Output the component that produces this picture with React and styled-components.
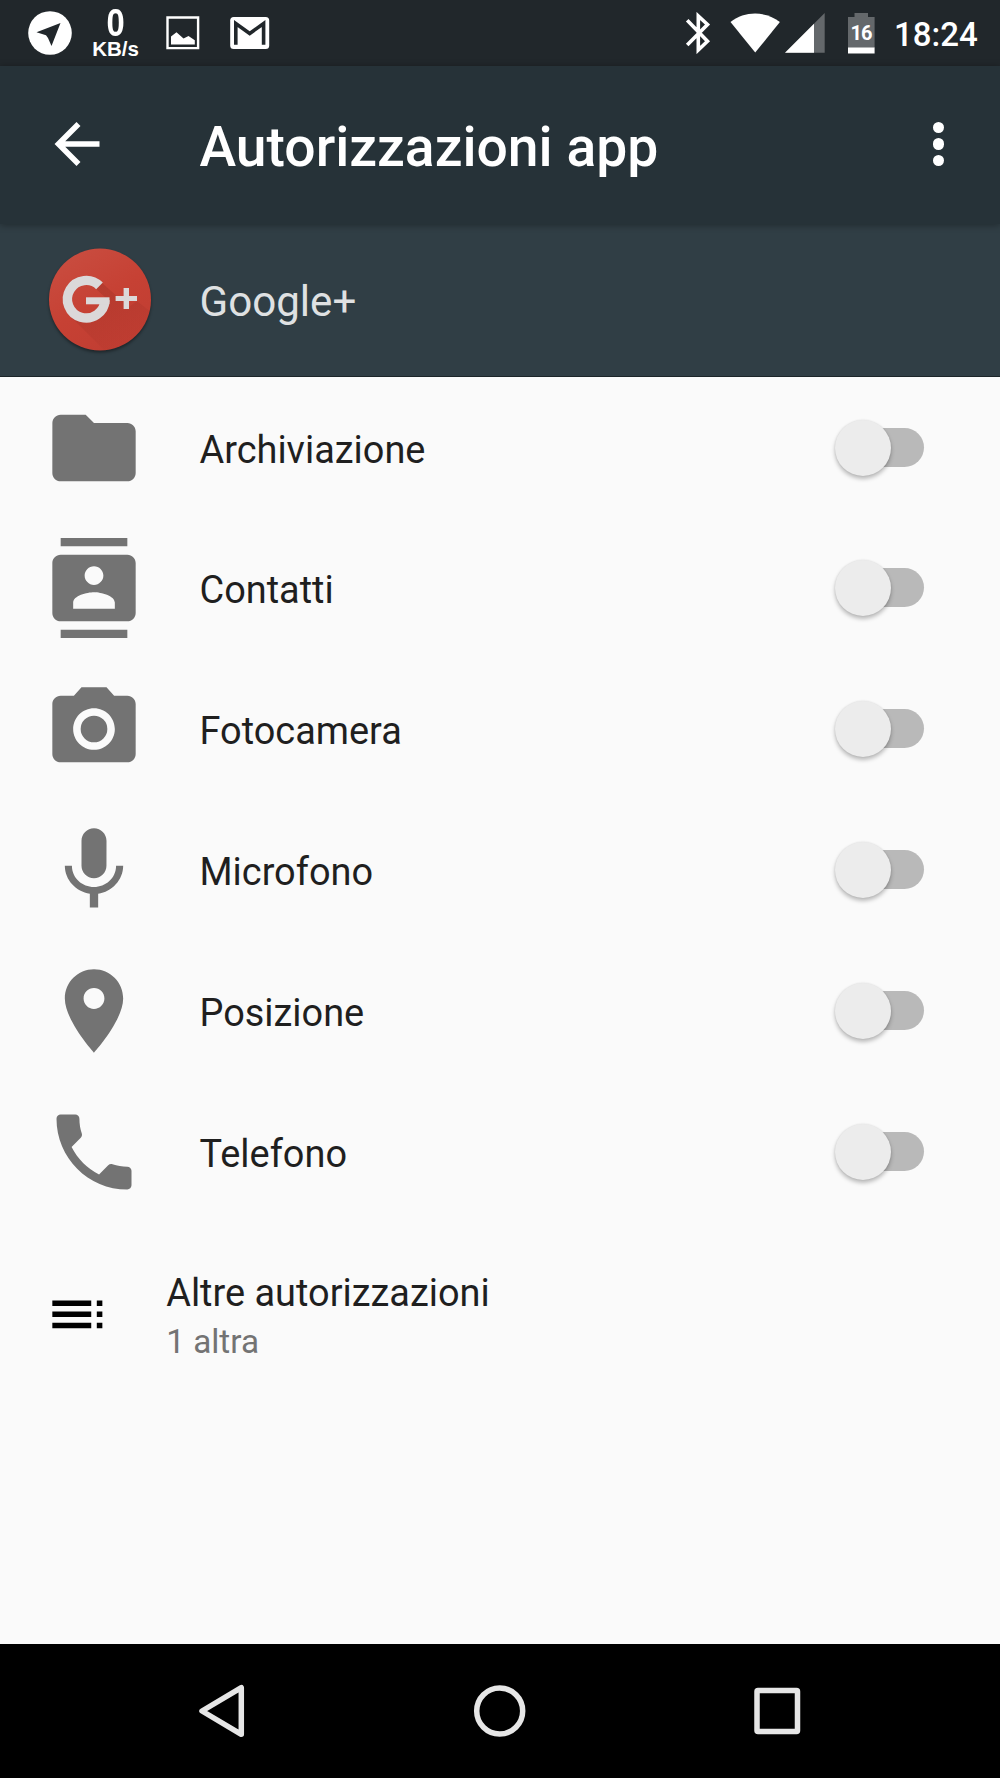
import { useState } from 'react'
import styled, { createGlobalStyle } from 'styled-components'

const permissions = [
  {
    name: 'Archiviazione',
    path: 'M10 4H4c-1.1 0-1.99.9-1.99 2L2 18c0 1.1.9 2 2 2h16c1.1 0 2-.9 2-2V8c0-1.1-.9-2-2-2h-8l-2-2z',
  },
  {
    name: 'Contatti',
    path: 'M20 0H4v2h16V0zM4 24h16v-2H4v2zM20 4H4c-1.1 0-2 .9-2 2v12c0 1.1.9 2 2 2h16c1.1 0 2-.9 2-2V6c0-1.1-.9-2-2-2zm-8 2.75c1.24 0 2.25 1.01 2.25 2.25s-1.01 2.25-2.25 2.25S9.75 10.24 9.75 9 10.76 6.75 12 6.75zM17 17H7v-1.5c0-1.67 3.33-2.5 5-2.5s5 .83 5 2.5V17z',
  },
  {
    name: 'Fotocamera',
    path: 'M12 8.8a3.2 3.2 0 1 0 0 6.4a3.2 3.2 0 1 0 0-6.4zM9 2L7.17 4H4c-1.1 0-2 .9-2 2v12c0 1.1.9 2 2 2h16c1.1 0 2-.9 2-2V6c0-1.1-.9-2-2-2h-3.17L15 2H9zm3 15c-2.76 0-5-2.24-5-5s2.24-5 5-5 5 2.24 5 5-2.24 5-5 5z',
  },
  {
    name: 'Microfono',
    path: 'M12 14c1.66 0 2.99-1.34 2.99-3L15 5c0-1.66-1.34-3-3-3S9 3.34 9 5v6c0 1.66 1.34 3 3 3zm5.3-3c0 3-2.54 5.1-5.3 5.1S6.7 14 6.7 11H5c0 3.41 2.72 6.23 6 6.72V21h2v-3.28c3.28-.48 6-3.3 6-6.72h-1.7z',
  },
  {
    name: 'Posizione',
    path: 'M12 2C8.13 2 5 5.13 5 9c0 5.25 7 13 7 13s7-7.75 7-13c0-3.87-3.13-7-7-7zm0 9.5c-1.38 0-2.5-1.12-2.5-2.5s1.12-2.5 2.5-2.5 2.5 1.12 2.5 2.5-1.12 2.5-2.5 2.5z',
  },
  {
    name: 'Telefono',
    path: 'M6.62 10.79c1.44 2.83 3.76 5.14 6.59 6.59l2.2-2.2c.27-.27.67-.36 1.02-.24 1.12.37 2.33.57 3.57.57.55 0 1 .45 1 1V20c0 .55-.45 1-1 1-9.39 0-17-7.61-17-17 0-.55.45-1 1-1h3.5c.55 0 1 .45 1 1 0 1.25.2 2.45.57 3.57.11.35.03.74-.25 1.02l-2.2 2.2z',
  },
]

function StatusBar() {
  return (
    <StatusBarStyled>
      <StatusIcon $left={27.5} width="44" height="44" viewBox="0 0 44 44">
        <circle cx="22" cy="22" r="21.8" />
        <path className="cut" d="M8.5 21.2L32.5 12L23.5 35L20 27L18 24.2z" />
      </StatusIcon>
      <NetSpeed>
        <span className="value">0</span>
        <span className="unit">KB/s</span>
      </NetSpeed>
      <StatusIcon $left={28} width="34" height="34" viewBox="0 0 34 34">
        <path fillRule="evenodd" d="M0.3 0.3H33.3V33.3H0.3zM2.7 2.7V30.9H30.9V2.7z" />
        <path d="M5 28.5V20.5L10.5 16.2L17.5 22.5L22.5 20L28.8 24.2V28.5z" />
      </StatusIcon>
      <StatusIcon $left={30} width="40" height="34" viewBox="0 0 40 34">
        <rect x="0.2" y="1" width="39" height="32" rx="3.5" />
        <path className="line" d="M5.8 28.8V7.5L19.7 17.5L33.6 7.5V28.8" />
      </StatusIcon>

      <StatusIcon $push width="26" height="42" viewBox="0 0 26 42">
        <path className="stroke" d="M2.2 8.2L22.5 29.3L13.3 38V4L22.5 12.5L2.2 33" />
      </StatusIcon>
      <StatusIcon $left={19} width="50" height="40" viewBox="0 0 50 40">
        <path d="M0.5 9C15 -2.3 35 -2.3 49.9 9L25.2 39.6z" />
      </StatusIcon>
      <StatusIcon $left={5} width="40" height="40" viewBox="0 0 40 40">
        <path className="dim" d="M39.7 0V39.7H0z" />
        <path d="M29 10.7V39.7H0z" />
      </StatusIcon>
      <Battery>
        <svg width="27" height="41" viewBox="0 0 27 41">
          <path className="dim" d="M0 4H6.5V0H20V4H26.6V35H0z" />
          <path d="M0 34.5H26.6V40.5H0z" />
        </svg>
        <span>16</span>
      </Battery>
      <Clock>18:24</Clock>
    </StatusBarStyled>
  )
}

function GooglePlusLogo() {
  return (
    <Logo width="108" height="108" viewBox="0 0 108 108">
      <defs>
        <linearGradient id="disc" x1="0.2" y1="0" x2="0.8" y2="1">
          <stop offset="0" stopColor="#c94d40" />
          <stop offset="0.5" stopColor="#c64134" />
          <stop offset="1" stopColor="#c03d32" />
        </linearGradient>
        <linearGradient id="fade" x1="0" y1="0" x2="0.6" y2="1">
          <stop offset="0" stopColor="#7a2119" stopOpacity="0.28" />
          <stop offset="1" stopColor="#7a2119" stopOpacity="0.02" />
        </linearGradient>
        <clipPath id="round">
          <circle cx="54" cy="53.5" r="51" />
        </clipPath>
      </defs>
      <circle cx="54" cy="53.5" r="51" fill="url(#disc)" />
      <path
        clipPath="url(#round)"
        fill="url(#fade)"
        d="M24 70L60 106L108 106L105 66L91 55L83 61L55 36L50 43L60 52V62L40 76z"
      />
      <path
        d="M53.5 39.9A18.8 18.8 0 1 0 59 54"
        fill="none"
        stroke="#dbd8d9"
        strokeWidth="9.4"
      />
      <path fill="#dbd8d9" d="M40 51.3h23.5v7H40z" />
      <path fill="#dbd8d9" d="M77.6 42H83v7.900h8v5.200h-8v8h-5.400v-8h-8v-5.200h8z" />
    </Logo>
  )
}

function Permission({ name, path }) {
  const [on, setOn] = useState(false)

  return (
    <PermissionStyled onClick={() => setOn(!on)}>
      <svg width="100" height="100" viewBox="0 0 24 24">
        <path fillRule="evenodd" d={path} />
      </svg>
      <p>{name}</p>
      <Switch $on={on}>
        <div className="thumb"></div>
      </Switch>
    </PermissionStyled>
  )
}

function App() {
  return (
    <>
      <GlobalStyle />
      <Screen>
        <StatusBar />
        <AppBar>
          <svg width="48" height="48" viewBox="0 0 48 48">
            <path d="M25.5 4L5.5 24L25.5 44M5.5 24H46.5" fill="none" stroke="#fff" strokeWidth="5.6" />
          </svg>
          <h1>Autorizzazioni app</h1>
          <div className="more">
            <i />
            <i />
            <i />
          </div>
        </AppBar>
        <AppHeader>
          <GooglePlusLogo />
          <p>Google+</p>
        </AppHeader>
        <List>
          {permissions.map((item) => (
            <Permission key={item.name} name={item.name} path={item.path} />
          ))}
          <MoreRow>
            <svg width="66.7" height="66.7" viewBox="0 0 24 24">
              <path d="M3 9h14V7H3v2zm0 4h14v-2H3v2zm0 4h14v-2H3v2zm16 0h2v-2h-2v2zm0-10v2h2V7h-2zm0 6h2v-2h-2v2z" />
            </svg>
            <div>
              <p className="title">Altre autorizzazioni</p>
              <p className="sub">1 altra</p>
            </div>
          </MoreRow>
        </List>
        <NavBar>
          <svg width="52" height="60" viewBox="0 0 52 60">
            <path d="M45.3 6.7V53.3L6 30z" />
          </svg>
          <svg width="60" height="60" viewBox="0 0 60 60">
            <circle cx="29.7" cy="30" r="23" />
          </svg>
          <svg width="52" height="60" viewBox="0 0 52 60">
            <rect x="6" y="9.5" width="40.5" height="41" rx="1" />
          </svg>
        </NavBar>
      </Screen>
    </>
  )
}

const GlobalStyle = createGlobalStyle`
    * {
        box-sizing: border-box;
        margin: 0;
        padding: 0;
    }
    body {
        font-family: Roboto, sans-serif;
        background-color: #fafafa;
    }
    svg {
        display: block;
        flex-shrink: 0;
    }
`;

const Screen = styled.div`
    width: 1000px;
    height: 1778px;
    display: flex;
    flex-direction: column;
    overflow: hidden;
    background-color: #fafafa;
`;

const StatusBarStyled = styled.div`
    display: flex;
    align-items: center;
    height: 66px;
    padding-right: 22px;
    flex-shrink: 0;
    background-color: #21272b;
    color: #fff;
`;

const StatusIcon = styled.svg`
    margin-left: ${({ $push, $left }) => ($push ? 'auto' : `${$left}px`)};
    fill: #fff;
    .cut {
        fill: #21272b;
    }
    .dim {
        fill: #64686b;
    }
    .line {
        fill: none;
        stroke: #21272b;
        stroke-width: 3.6;
    }
    .stroke {
        fill: none;
        stroke: #fff;
        stroke-width: 3.6;
    }
`;

const NetSpeed = styled.div`
    display: flex;
    flex-direction: column;
    align-items: center;
    width: 47px;
    margin-left: 20.5px;
    margin-right: -1px;
    padding-top: 1px;
    font-family: 'Liberation Sans', sans-serif;
    font-weight: bold;
    .value {
        font-size: 38px;
        line-height: 31px;
        transform: scaleX(0.86);
    }
    .unit {
        font-size: 20.5px;
        line-height: 20px;
    }
`;

const Battery = styled.div`
    display: grid;
    place-items: center;
    margin-left: 23px;
    fill: #fff;
    .dim {
        fill: #64686b;
    }
    > * {
        grid-area: 1 / 1;
    }
    span {
        padding-right: 1px;
        font-size: 20px;
        font-weight: 700;
        line-height: 20px;
        letter-spacing: -1px;
    }
`;

const Clock = styled.p`
    width: 84px;
    margin-left: 19px;
    padding-top: 4px;
    font-size: 33px;
    font-weight: 500;
    line-height: 40px;
    white-space: nowrap;
`;

const AppBar = styled.div`
    position: relative;
    display: flex;
    align-items: center;
    height: 158px;
    padding: 0 56px 2px 53px;
    flex-shrink: 0;
    background-color: #263238;
    box-shadow: 0 1px 7px rgba(0, 0, 0, 0.35);
    h1 {
        flex: 1;
        margin-left: 98.5px;
        padding-top: 5px;
        color: #fff;
        font-size: 55.25px;
        font-weight: 500;
    }
    .more {
        display: flex;
        flex-direction: column;
        gap: 5.6px;
        i {
            width: 11.2px;
            height: 11.2px;
            border-radius: 50%;
            background-color: #fff;
        }
    }
`;

const AppHeader = styled.div`
    display: flex;
    align-items: center;
    height: 153.2px;
    padding-left: 46px;
    flex-shrink: 0;
    background-color: #303e45;
    border-bottom: 1px solid #1c2529;
    p {
        margin-left: 45.5px;
        padding-top: 2px;
        color: #dfe1e2;
        font-size: 42.1px;
    }
`;

const Logo = styled.svg`
    filter: drop-shadow(0 2px 1.5px rgba(0, 0, 0, 0.4));
`;

const List = styled.div`
    flex: 1;
`;

const PermissionStyled = styled.div`
    display: flex;
    align-items: center;
    height: 140.8px;
    padding: 0 76.5px 0 44px;
    cursor: pointer;
    svg {
        fill: #737373;
    }
    p {
        flex: 1;
        margin-left: 55.5px;
        padding-top: 4px;
        color: #1f1f1f;
        font-size: 37.9px;
    }
`;

const Switch = styled.div`
    display: flex;
    align-items: center;
    justify-content: ${({ $on }) => ($on ? 'flex-end' : 'flex-start')};
    width: 79px;
    height: 39px;
    margin: 0 0 1px 10px;
    border-radius: 20px;
    background-color: #b9b9b9;
    .thumb {
        flex-shrink: 0;
        width: 56px;
        height: 56px;
        margin: 1px 0 0 -10px;
        border-radius: 50%;
        background-color: #ececec;
        box-shadow: 0 3px 4px rgba(0, 0, 0, 0.26), 0 0 2px rgba(0, 0, 0, 0.1);
    }
`;

const MoreRow = styled.div`
    display: flex;
    align-items: center;
    height: 185px;
    padding-left: 44px;
    .title {
        color: #1f1f1f;
        font-size: 37.9px;
        line-height: 49px;
    }
    .sub {
        color: #737373;
        font-size: 33.3px;
        line-height: 48px;
    }
    div {
        margin-left: 55.5px;
        padding-top: 6px;
    }
`;

const NavBar = styled.div`
    display: flex;
    align-items: center;
    justify-content: space-between;
    height: 134px;
    padding: 0 197px 0 196px;
    flex-shrink: 0;
    background-color: #000;
    svg {
        fill: none;
        stroke: #e6e6e6;
        stroke-width: 5.5;
        stroke-linejoin: round;
    }
`;

export default App
